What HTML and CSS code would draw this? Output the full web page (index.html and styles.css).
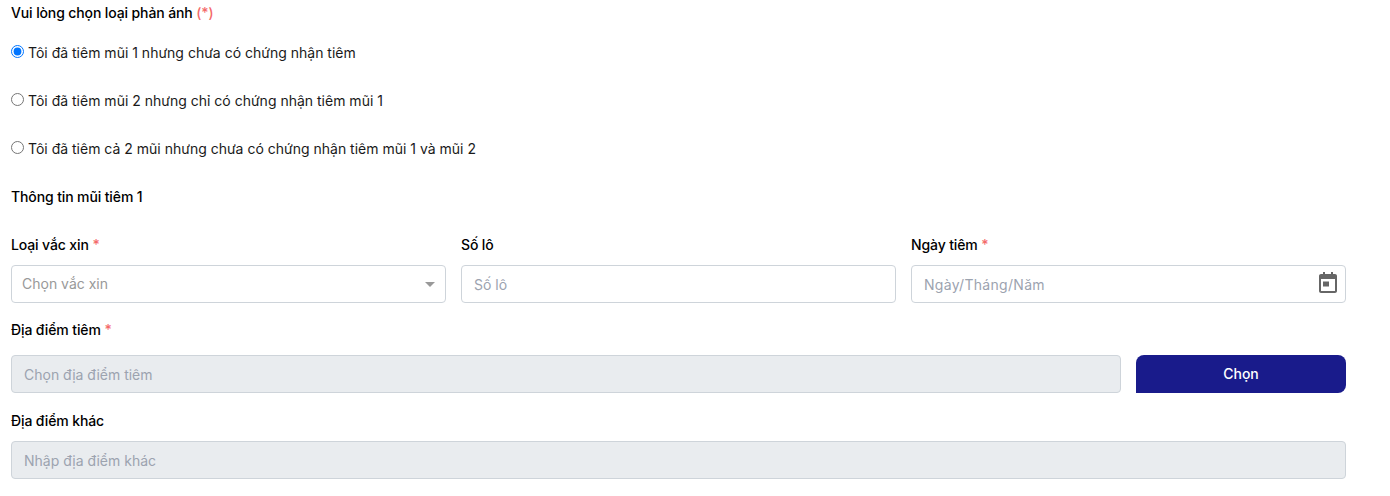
FILE: index.html
```html
<!DOCTYPE html>
<html lang="vi">

<head>
    <meta charset="UTF-8">
    <meta name="viewport" content="width=device-width, initial-scale=1.0">
    <title>Phản ánh thông tin tiêm</title>
    <link rel="stylesheet" href="styles.css">
</head>

<body>
    <main class="form">
        <div class="title">Vui lòng chọn loại phản ánh <span class="req-soft">(*)</span></div>

        <div class="radios">
            <label class="radio"><input type="radio" name="loai" checked><span>Tôi đã tiêm mũi 1 nhưng chưa có chứng nhận tiêm</span></label>
            <label class="radio"><input type="radio" name="loai"><span>Tôi đã tiêm mũi 2 nhưng chỉ có chứng nhận tiêm mũi 1</span></label>
            <label class="radio"><input type="radio" name="loai"><span>Tôi đã tiêm cả 2 mũi nhưng chưa có chứng nhận tiêm mũi 1 và mũi 2</span></label>
        </div>

        <div class="section">Thông tin mũi tiêm 1</div>

        <div class="row-3">
            <div class="field">
                <div class="label">Loại vắc xin <span class="req">*</span></div>
                <div class="select">
                    <span class="select-text">Chọn vắc xin</span>
                    <span class="caret"></span>
                </div>
            </div>
            <div class="field">
                <div class="label">Số lô</div>
                <input class="ipt" type="text" placeholder="Số lô">
            </div>
            <div class="field">
                <div class="label">Ngày tiêm <span class="req">*</span></div>
                <div class="date">
                    <input class="ipt ipt-date" type="text" placeholder="Ngày/Tháng/Năm">
                    <svg class="cal" viewBox="0 0 24 24" width="24" height="24">
                        <path fill="#666" fill-rule="evenodd" d="M7 1h2v2h6V1h2v2h2c1.1 0 2 .9 2 2v15c0 1.1-.9 2-2 2H5c-1.1 0-2-.9-2-2V5c0-1.1.9-2 2-2h2V1zM5 8v12h14V8H5z" />
                        <rect fill="#666" x="7" y="10.5" width="6" height="5" />
                    </svg>
                </div>
            </div>
        </div>

        <div class="label label-place">Địa điểm tiêm <span class="req">*</span></div>
        <div class="row-place">
            <input class="ipt" type="text" placeholder="Chọn địa điểm tiêm" disabled>
            <button class="btn" type="button">Chọn</button>
        </div>

        <div class="label label-other">Địa điểm khác</div>
        <input class="ipt" type="text" placeholder="Nhập địa điểm khác" disabled>
    </main>
</body>

</html>
```

FILE: styles.css
```css
* {
    margin: 0;
    padding: 0;
    box-sizing: border-box;
}

html,
body {
    width: 100%;
    height: 100%;
    background-color: #ffffff;
}

body {
    font-family: Inter, "Liberation Sans", sans-serif;
    font-size: 14px;
    line-height: 20px;
    color: #1a1a1a;
    overflow: hidden;
}

.form {
    width: 1335px;
    margin-left: 11px;
    padding-top: 3px;
}

.title,
.section,
.label {
    font-weight: 500;
    color: #000000;
    letter-spacing: -0.12px;
}

.req-soft,
.req {
    color: #f46a6a;
}

.radios {
    margin-top: 20px;
}

.radio {
    display: flex;
    align-items: center;
    height: 20px;
    margin-bottom: 28px;
}

.radio input {
    width: 13px;
    height: 13px;
    margin-right: 4px;
    position: relative;
    top: -2px;
}

.section {
    margin-top: 1px;
}

.row-3 {
    display: grid;
    grid-template-columns: repeat(3, 1fr);
    column-gap: 15px;
    margin-top: 28px;
}

.label {
    height: 20px;
    margin-bottom: 10px;
}

.ipt,
.select {
    display: block;
    width: 100%;
    height: 38px;
    border: 1px solid #ced4da;
    border-radius: 4px;
    background-color: #ffffff;
    font-family: inherit;
    font-size: 14px;
    outline: none;
}

.ipt {
    padding: 0 12px;
}

.ipt::placeholder {
    color: #9ca3af;
    opacity: 1;
}

.ipt:disabled {
    background-color: #e9ecef;
}

.ipt-date {
    letter-spacing: 0.3px;
}

.select {
    display: flex;
    align-items: center;
    justify-content: space-between;
    padding: 0 10px;
}

.select-text {
    color: #999999;
}

.caret {
    width: 0;
    height: 0;
    border-left: 5px solid transparent;
    border-right: 5px solid transparent;
    border-top: 5px solid #999999;
}

.date {
    position: relative;
}

.cal {
    position: absolute;
    right: 6px;
    top: 6px;
}

.label-place {
    margin-top: 17px;
    margin-bottom: 15px;
}

.row-place {
    display: grid;
    grid-template-columns: 1fr 210px;
    column-gap: 15px;
}

.btn {
    height: 38px;
    padding-bottom: 2px;
    border: none;
    border-radius: 8px 8px 8px 0;
    background-color: #191b8b;
    color: #ffffff;
    font-family: inherit;
    font-size: 14px;
    font-weight: 500;
}

.label-other {
    margin-top: 18px;
    margin-bottom: 10px;
}
```
